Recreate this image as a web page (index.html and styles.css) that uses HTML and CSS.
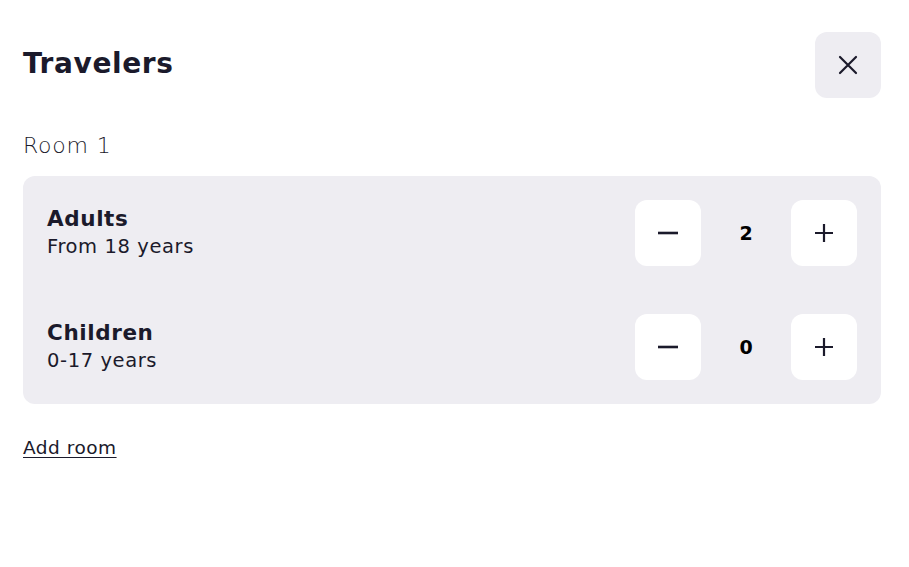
FILE: index.html
```html
<!DOCTYPE html>
<html lang="en">
<head>
<meta charset="utf-8">
<title>Travelers</title>
<link rel="stylesheet" href="styles.css">
</head>
<body>
<div class="panel">
  <header class="header">
    <h1 class="title">Travelers</h1>
    <button class="close" aria-label="Close">
      <svg width="24" height="24" viewBox="0 0 24 24"><path d="M4 4 L20 20 M20 4 L4 20" stroke="#1b1a2b" stroke-width="2.2" stroke-linecap="round" fill="none"/></svg>
    </button>
  </header>
  <div class="room-label">Room 1</div>
  <div class="card">
    <div class="row">
      <div class="info">
        <div class="label">Adults</div>
        <div class="sub">From 18 years</div>
      </div>
      <div class="counter">
        <button class="step" aria-label="Decrease"><svg width="24" height="24" viewBox="0 0 24 24"><path d="M2 12 H22" stroke="#1b1a2b" stroke-width="2.6" fill="none"/></svg></button>
        <span class="count">2</span>
        <button class="step" aria-label="Increase"><svg width="24" height="24" viewBox="0 0 24 24"><path d="M3 12 H21 M12 3 V21" stroke="#1b1a2b" stroke-width="2.2" fill="none"/></svg></button>
      </div>
    </div>
    <div class="row">
      <div class="info">
        <div class="label">Children</div>
        <div class="sub">0-17 years</div>
      </div>
      <div class="counter">
        <button class="step" aria-label="Decrease"><svg width="24" height="24" viewBox="0 0 24 24"><path d="M2 12 H22" stroke="#1b1a2b" stroke-width="2.6" fill="none"/></svg></button>
        <span class="count">0</span>
        <button class="step" aria-label="Increase"><svg width="24" height="24" viewBox="0 0 24 24"><path d="M3 12 H21 M12 3 V21" stroke="#1b1a2b" stroke-width="2.2" fill="none"/></svg></button>
      </div>
    </div>
  </div>
  <a class="add-room" href="#">Add room</a>
</div>
</body>
</html>
```
FILE: styles.css
```css
* { box-sizing: border-box; }
html, body { margin: 0; padding: 0; background: #fff; }
body {
  font-family: "DejaVu Sans", "Open Sans", sans-serif;
  color: #1b1a2b;
}
.panel {
  padding: 32px 28px 0 23px;
  display: flex;
  flex-direction: column;
}
.header {
  display: flex;
  justify-content: space-between;
  align-items: center;
  height: 66px;
}
.title {
  margin: 0;
  font-size: 28px;
  font-weight: 700;
  line-height: 34px;
  letter-spacing: 0.6px;
  margin-top: -2px;
}
.close {
  width: 66px;
  height: 66px;
  border: none;
  border-radius: 12px;
  background: #eeedf2;
  display: flex;
  align-items: center;
  justify-content: center;
  padding: 0;
}
.room-label {
  margin-top: 33px;
  font-size: 22px;
  font-weight: 300;
  line-height: 30px;
  letter-spacing: 0.8px;
}
.card {
  margin-top: 15px;
  background: #eeedf2;
  border-radius: 12px;
  padding: 24px;
  display: flex;
  flex-direction: column;
  gap: 48px;
}
.row {
  display: flex;
  justify-content: space-between;
  align-items: center;
  height: 66px;
}
.label {
  font-size: 21.5px;
  font-weight: 700;
  line-height: 26px;
  letter-spacing: 0.6px;
  margin-top: -1px;
}
.label.wide { letter-spacing: 1px; }
.sub {
  font-size: 19.5px;
  font-weight: 400;
  line-height: 26px;
  letter-spacing: 0.6px;
  margin-top: 2px;
}
.counter {
  display: flex;
  align-items: center;
}
.step {
  width: 66px;
  height: 66px;
  border: none;
  border-radius: 12px;
  background: #fff;
  display: flex;
  align-items: center;
  justify-content: center;
  padding: 0;
}
.count {
  width: 90px;
  text-align: center;
  font-size: 19px;
  font-weight: 700;
  color: #000;
  margin-top: -1px;
}
.add-room {
  margin-top: 32px;
  align-self: flex-start;
  font-size: 18.5px;
  line-height: 24px;
  letter-spacing: 0.5px;
  color: #1b1a2b;
  text-decoration: underline;
  text-underline-offset: 3px;
  text-decoration-thickness: 1px;
}
```
